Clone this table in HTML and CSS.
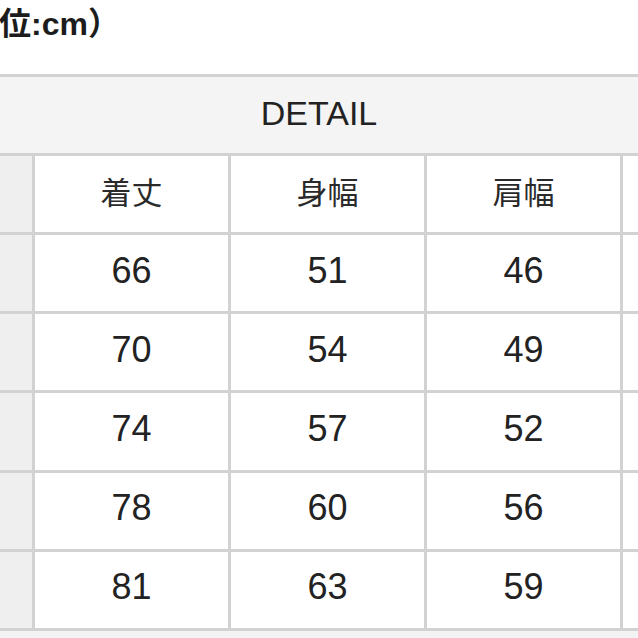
FILE: index.html
```html
<!DOCTYPE html>
<html lang="ja">
<head>
<meta charset="utf-8">
<link rel="stylesheet" href="styles.css">
</head>
<body>
<div class="title">位:cm）</div>
<div class="sheet">
  <div class="detail">DETAIL</div>
  <div class="side"></div><div class="cell head">着丈</div><div class="cell head">身幅</div><div class="cell head">肩幅</div><div class="edge"></div>
  <div class="side"></div><div class="cell">66</div><div class="cell">51</div><div class="cell">46</div><div class="edge"></div>
  <div class="side"></div><div class="cell">70</div><div class="cell">54</div><div class="cell">49</div><div class="edge"></div>
  <div class="side"></div><div class="cell">74</div><div class="cell">57</div><div class="cell">52</div><div class="edge"></div>
  <div class="side"></div><div class="cell">78</div><div class="cell">60</div><div class="cell">56</div><div class="edge"></div>
  <div class="side"></div><div class="cell">81</div><div class="cell">63</div><div class="cell">59</div><div class="edge"></div>
</div>
<div class="foot"></div>
</body>
</html>
```

FILE: styles.css
```css
html, body {
  margin: 0;
  padding: 0;
  background: #ffffff;
  width: 638px;
  height: 638px;
  overflow: hidden;
}

.title {
  height: 74px;
  box-sizing: border-box;
  padding-top: 4px;
  margin-left: -1px;
  font-family: "Liberation Sans", "Noto Sans CJK JP", sans-serif;
  font-weight: 700;
  font-size: 32px;
  line-height: 40px;
  color: #1c1c1c;
  white-space: nowrap;
}

.sheet {
  display: grid;
  grid-template-columns: 32px 193px 193px 193px 1fr;
  grid-template-rows: 76px repeat(6, 76.17px);
  gap: 3px;
  background: #d2d2d2;
  border-top: 3px solid #d2d2d2;
  border-bottom: 3px solid #d2d2d2;
}

.detail {
  grid-column: 1 / -1;
  background: #f4f4f4;
  display: flex;
  align-items: center;
  justify-content: center;
  padding-bottom: 4px;
  box-sizing: border-box;
  font-family: "Liberation Sans", sans-serif;
  font-size: 34px;
  color: #222222;
}

.side {
  background: #efefef;
}

.edge {
  background: #ffffff;
}

.cell {
  background: #ffffff;
  display: flex;
  align-items: center;
  justify-content: center;
  padding-bottom: 5px;
  box-sizing: border-box;
  font-family: "Liberation Sans", sans-serif;
  font-size: 36px;
  color: #222222;
}

.cell.head {
  font-family: "Noto Sans CJK JP", sans-serif;
  font-size: 31px;
  color: #2a2a2a;
  padding-bottom: 8px;
}

.foot {
  height: 10px;
  background: #f3f3f3;
}
```
